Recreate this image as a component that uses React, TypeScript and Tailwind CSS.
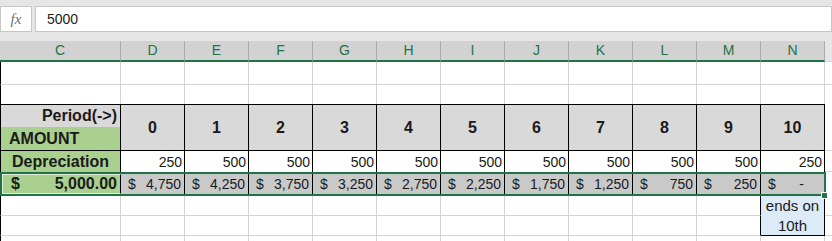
import React from 'react'

const cols = ['D', 'E', 'F', 'G', 'H', 'I', 'J', 'K', 'L', 'M', 'N']
const dep = [250, 500, 500, 500, 500, 500, 500, 500, 500, 500, 250]
const vals = ['4,750', '4,250', '3,750', '3,250', '2,750', '2,250', '1,750', '1,250', '750', '250', '-']

const font = { fontFamily: '"Liberation Sans", Arial, sans-serif' }

function BlankRow({ h, last }: { h: string; last?: boolean }) {
  return (
    <div className={`flex ${h}`}>
      <div className={`w-[121px] shrink-0 border-l border-l-black border-r border-r-[#d4d4d4] ${last ? '' : 'border-b border-b-[#d4d4d4]'}`} />
      {cols.map((c) => (
        <div key={c} className={`w-[64px] shrink-0 border-r border-r-[#d4d4d4] ${last ? '' : 'border-b border-b-[#d4d4d4]'}`} />
      ))}
      <div className={`flex-1 ${last ? '' : 'border-b border-b-[#d4d4d4]'}`} />
    </div>
  )
}

export default function App() {
  return (
    <div className="w-[832px] h-[241px] overflow-hidden bg-white text-[#1a1a1a]" style={font}>
      {/* formula bar */}
      <div className="h-[41px] bg-[#e6e6e6] flex items-start pt-[6px] gap-[3px]">
        <div className="w-[32px] h-[26px] bg-white border border-[#c6c6c6] flex items-center justify-center">
          <span className="text-[#6e6e6e] text-[15px] italic" style={{ fontFamily: '"Liberation Serif", serif' }}>fx</span>
        </div>
        <div className="flex-1 h-[26px] bg-white border border-[#c6c6c6] flex items-center pl-[11px] text-[14px] text-[#222]">
          5000
        </div>
      </div>

      {/* column headers */}
      <div className="flex h-[21px]">
        <div className="w-[121px] shrink-0 bg-[#d2d2d2] border-r border-r-[#ababab] border-b-2 border-b-[#217346] flex items-center justify-center text-[14px] text-[#217346]">
          C
        </div>
        {cols.map((c) => (
          <div
            key={c}
            className="w-[64px] shrink-0 bg-[#d2d2d2] border-r border-r-[#ababab] border-b-2 border-b-[#217346] flex items-center justify-center text-[14px] text-[#217346]"
          >
            {c}
          </div>
        ))}
        <div className="flex-1 bg-[#e6e6e6] border-b border-b-[#d4d4d4]" />
      </div>

      <BlankRow h="h-[23px]" />
      <BlankRow h="h-[19px]" last />

      {/* header block */}
      <div className="flex">
        <div className="w-[825px] shrink-0 flex border-t border-b border-l border-black">
          <div className="w-[120px] shrink-0 border-r border-black flex flex-col">
            <div className="h-[22px] bg-[#d9d9d9] flex items-center justify-end pr-[3px] text-[16px] font-bold">Period(-&gt;)</div>
            <div className="h-[23px] bg-[#a9d08e] flex items-center pl-[8px] text-[16px] font-bold">AMOUNT</div>
          </div>
          {cols.map((c, i) => (
            <div key={c} className="w-[64px] shrink-0 h-[45px] bg-[#d9d9d9] border-r border-black flex items-center justify-center text-[16px] font-bold">
              {i}
            </div>
          ))}
        </div>
        <div className="flex-1 border-b border-b-[#d4d4d4]" />
      </div>

      {/* depreciation */}
      <div className="flex h-[21px]">
        <div className="w-[825px] shrink-0 flex border-l border-black">
          <div className="w-[120px] shrink-0 bg-[#a9d08e] border-r border-black flex items-center justify-center text-[16px] font-bold">
            Depreciation
          </div>
          {dep.map((d, i) => (
            <div key={i} className="w-[64px] shrink-0 border-r border-black flex items-end justify-end pr-[2px] text-[14px] leading-[19px]">
              {d}
            </div>
          ))}
        </div>
        <div className="flex-1 border-b border-b-[#d4d4d4]" />
      </div>

      {/* values row (selected) */}
      <div className="flex h-[24px]">
        <div className="relative w-[826px] shrink-0 flex border-2 border-[#217346]">
          <div className="w-[119px] shrink-0 bg-[#a9d08e] border border-[#e4f0dc] border-r-black flex items-center justify-between pl-[8px] pr-[3px] text-[16px] font-bold">
            <span>$</span>
            <span>5,000.00</span>
          </div>
          {vals.map((v, i) => (
            <div
              key={i}
              className={`${i === 10 ? 'w-[63px]' : 'w-[64px] border-r border-black'} shrink-0 bg-[#c9c9c9] flex items-center justify-between pl-[7px] ${i === 10 ? 'pr-[20px]' : 'pr-[3px]'} text-[14px]`}
            >
              <span>$</span>
              <span>{v}</span>
            </div>
          ))}
          <div className="absolute right-[-4px] bottom-[-5px] w-[7px] h-[7px] bg-[#217346] border border-white" />
        </div>
        <div className="flex-1" />
      </div>

      {/* lower rows */}
      <div className="grid grid-cols-[121px_repeat(11,64px)_1fr] grid-rows-[20px_20px_10px]">
        {[0, 1, 2].map((r) => (
          <React.Fragment key={r}>
            <div className={`border-l border-l-black border-r border-r-[#d4d4d4] ${r < 2 ? 'border-b border-b-[#d4d4d4]' : ''}`} />
            {cols.slice(0, 10).map((c, i) => (
              <div
                key={c}
                className={`border-r ${i === 9 && r < 2 ? 'border-r-black' : 'border-r-[#d4d4d4]'} ${r < 2 ? 'border-b border-b-[#d4d4d4]' : ''}`}
              />
            ))}
            {r === 0 && (
              <div className="row-span-2 bg-[#ddebf7] border-r border-b border-black flex flex-col items-center justify-center text-[15px] leading-[20px]">
                <span>ends on</span>
                <span>10th</span>
              </div>
            )}
            {r === 2 && <div className="border-r border-r-[#d4d4d4]" />}
            <div className={r < 2 ? 'border-b border-b-[#d4d4d4]' : ''} />
          </React.Fragment>
        ))}
      </div>
    </div>
  )
}
